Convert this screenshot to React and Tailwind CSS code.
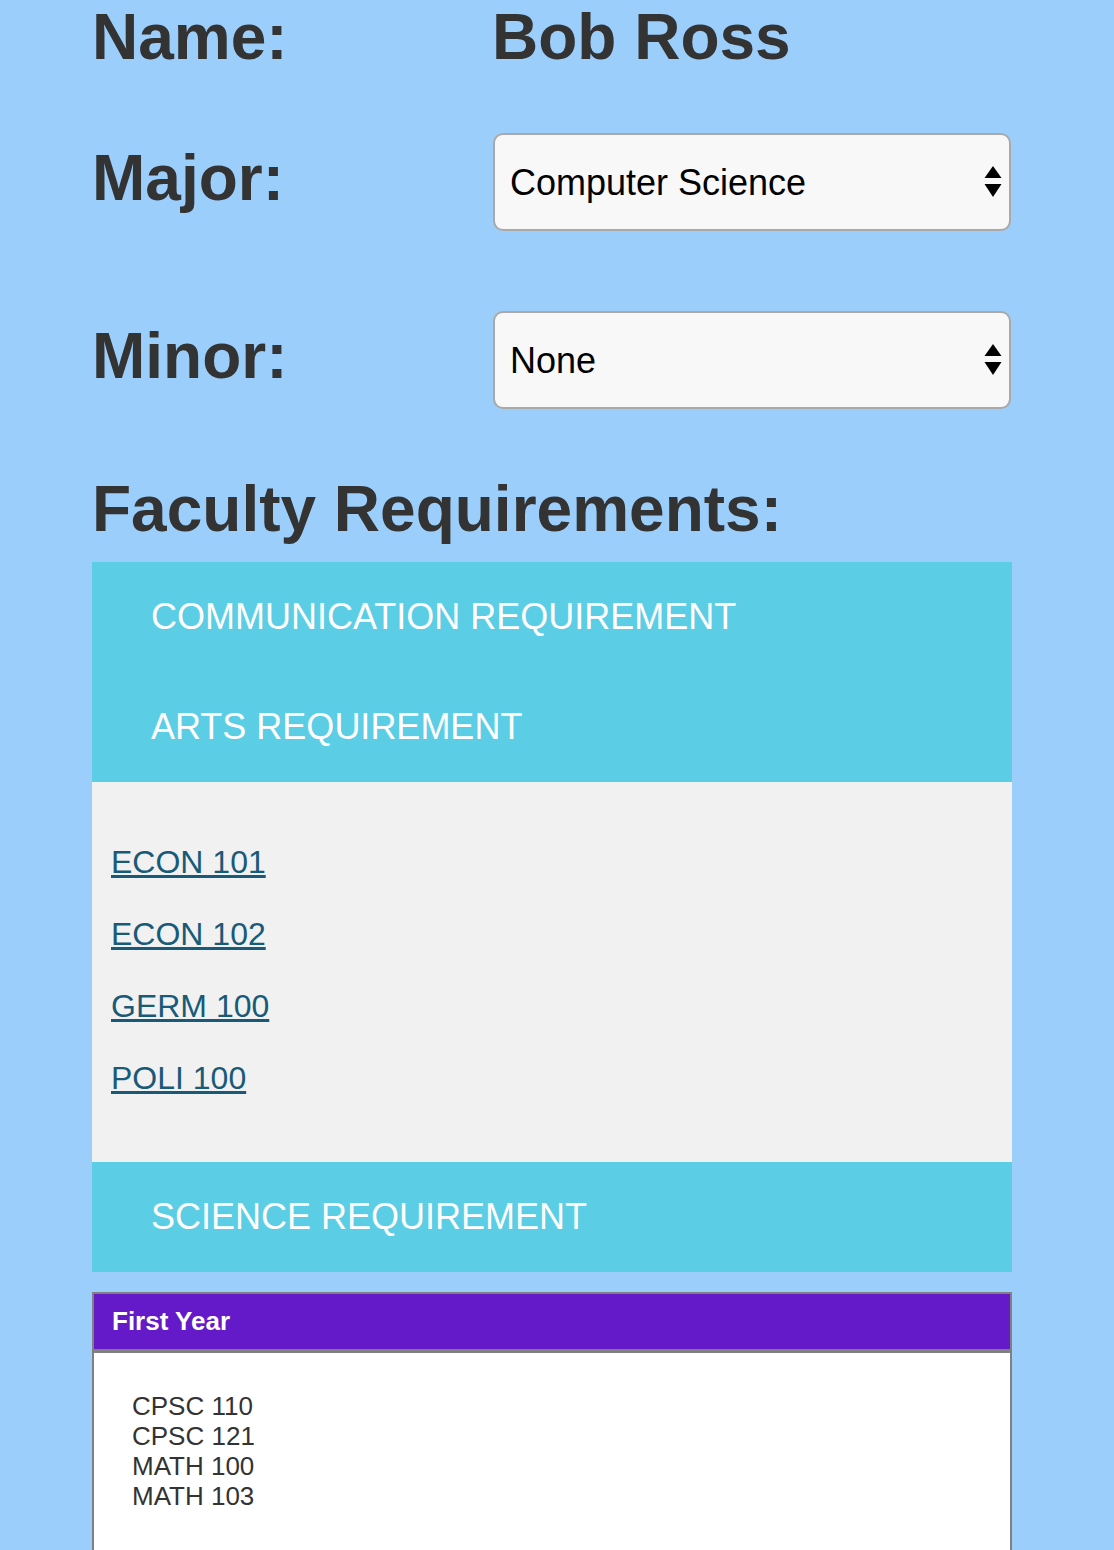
import { useState } from 'react';

const requirements = [
  { id: 'comm', title: 'COMMUNICATION REQUIREMENT', courses: [] },
  { id: 'arts', title: 'ARTS REQUIREMENT', courses: ['ECON 101', 'ECON 102', 'GERM 100', 'POLI 100'] },
  { id: 'sci', title: 'SCIENCE REQUIREMENT', courses: [] },
];

const firstYear = ['CPSC 110', 'CPSC 121', 'MATH 100', 'MATH 103'];

function SelectArrows() {
  return (
    <svg
      width="18"
      height="32"
      viewBox="0 0 18 32"
      className="pointer-events-none absolute right-[9px] top-1/2 -translate-y-1/2"
      aria-hidden="true"
    >
      <polygon points="9,0 17.5,12 0.5,12" fill="#000" />
      <polygon points="0.5,18 17.5,18 9,31" fill="#000" />
    </svg>
  );
}

function Dropdown({ value, options, onChange }) {
  return (
    <div className="relative ml-[1px] h-[98px] w-[518px]">
      <select
        value={value}
        onChange={(e) => onChange(e.target.value)}
        className="h-full w-full appearance-none rounded-[10px] border-2 border-[#a9a9a9] bg-[#f8f8f8] pl-[15px] text-[36px] leading-[normal] text-black outline-none"
      >
        {options.map((opt) => (
          <option key={opt} value={opt}>
            {opt}
          </option>
        ))}
      </select>
      <SelectArrows />
    </div>
  );
}

export default function App() {
  const [major, setMajor] = useState('Computer Science');
  const [minor, setMinor] = useState('None');
  const [open, setOpen] = useState('arts');

  return (
    <div className="min-h-screen bg-[#9ccefc] font-['Liberation_Sans',Arial,sans-serif] leading-[normal] text-[#333]">
      <div className="pl-[92px]">
        {/* Student info */}
        <div className="flex">
          <h1 className="w-[400px] text-[64px] font-bold leading-[normal]">Name:</h1>
          <h1 className="text-[64px] font-bold leading-[normal]">Bob Ross</h1>
        </div>

        <div className="mt-[59px] flex items-start">
          <h2 className="mt-[8px] w-[400px] text-[64px] font-bold leading-[normal]">Major:</h2>
          <Dropdown
            value={major}
            onChange={setMajor}
            options={['Computer Science', 'Mathematics', 'Physics', 'Economics']}
          />
        </div>

        <div className="mt-[80px] flex items-start">
          <h2 className="mt-[8px] w-[400px] text-[64px] font-bold leading-[normal]">Minor:</h2>
          <Dropdown
            value={minor}
            onChange={setMinor}
            options={['None', 'Mathematics', 'Statistics', 'Commerce']}
          />
        </div>

        {/* Faculty requirements accordion */}
        <h2 className="mt-[63px] text-[64px] font-bold leading-[normal]">Faculty Requirements:</h2>

        <div className="mt-[16px] w-[920px]">
          {requirements.map((req) => (
            <div key={req.id}>
              <button
                type="button"
                onClick={() => setOpen(open === req.id ? null : req.id)}
                className="flex h-[110px] w-full items-center bg-[#5bcde5] pl-[59px] text-left text-[36px] leading-[normal] text-white"
              >
                {req.title}
              </button>
              {open === req.id && req.courses.length > 0 && (
                <div className="bg-[#f1f1f1] pb-[48px] pl-[19px] pt-[44px]">
                  {req.courses.map((course) => (
                    <div key={course} className="h-[72px] text-[32px] leading-[72px]">
                      <a href="#" className="text-[#185a78] underline">
                        {course}
                      </a>
                    </div>
                  ))}
                </div>
              )}
            </div>
          ))}
        </div>

        {/* Year plan */}
        <div className="mt-[20px] w-[920px] border-2 border-[#808080] bg-white">
          <div className="flex h-[59px] items-center border-b-4 border-[#808080] bg-[#641ac8] pl-[18px] text-[26px] font-bold leading-[normal] text-white">
            First Year
          </div>
          <ul className="pb-[60px] pl-[38px] pt-[38px] text-[26px] leading-[30px]">
            {firstYear.map((course) => (
              <li key={course}>{course}</li>
            ))}
          </ul>
        </div>
      </div>
    </div>
  );
}
